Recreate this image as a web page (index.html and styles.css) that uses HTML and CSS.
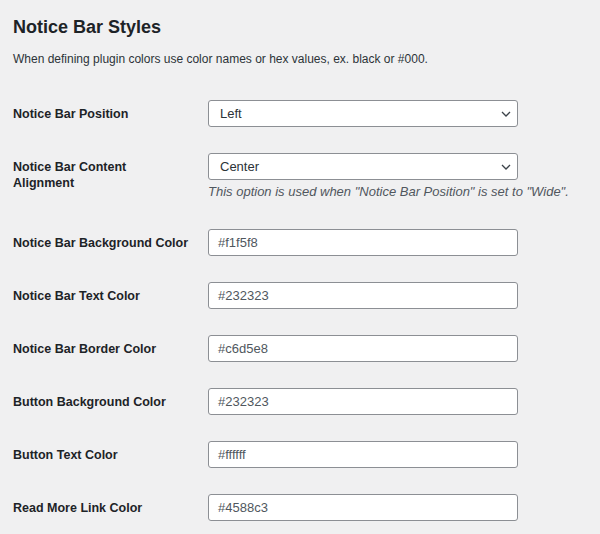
FILE: index.html
```html
<!DOCTYPE html>
<html>
<head>
<meta charset="utf-8">
<link rel="stylesheet" href="styles.css">
</head>
<body>
<div class="page">
  <h2 class="title">Notice Bar Styles</h2>
  <p class="intro">When defining plugin colors use color names or hex values, ex. black or #000.</p>
  <div class="form">
    <div class="row">
      <div class="label">Notice Bar Position</div>
      <div class="field">
        <div class="select"><span>Left</span><svg class="chev" width="10" height="6" viewBox="0 0 10 6"><path d="M1 1l4 4 4-4" fill="none" stroke="#3c434a" stroke-width="1.3"/></svg></div>
      </div>
    </div>
    <div class="row row-desc">
      <div class="label">Notice Bar Content<br>Alignment</div>
      <div class="field">
        <div class="select"><span>Center</span><svg class="chev" width="10" height="6" viewBox="0 0 10 6"><path d="M1 1l4 4 4-4" fill="none" stroke="#3c434a" stroke-width="1.3"/></svg></div>
        <p class="desc">This option is used when "Notice Bar Position" is set to "Wide".</p>
      </div>
    </div>
    <div class="row">
      <div class="label">Notice Bar Background Color</div>
      <div class="field"><div class="input">#f1f5f8</div></div>
    </div>
    <div class="row">
      <div class="label">Notice Bar Text Color</div>
      <div class="field"><div class="input">#232323</div></div>
    </div>
    <div class="row">
      <div class="label">Notice Bar Border Color</div>
      <div class="field"><div class="input">#c6d5e8</div></div>
    </div>
    <div class="row">
      <div class="label">Button Background Color</div>
      <div class="field"><div class="input">#232323</div></div>
    </div>
    <div class="row">
      <div class="label">Button Text Color</div>
      <div class="field"><div class="input">#ffffff</div></div>
    </div>
    <div class="row">
      <div class="label">Read More Link Color</div>
      <div class="field"><div class="input">#4588c3</div></div>
    </div>
  </div>
</div>
</body>
</html>
```

FILE: styles.css
```css
html, body {
  margin: 0;
  padding: 0;
  background: #f0f0f1;
}
body {
  font-family: "Liberation Sans", Arial, sans-serif;
  color: #1d2327;
  font-size: 13px;
}
.page {
  padding: 16px 13px 0 13px;
}
.title {
  margin: 0;
  font-size: 18px;
  font-weight: 700;
  line-height: 22px;
  color: #1d2327;
}
.intro {
  margin: 13px 0 0 0;
  font-size: 12px;
  line-height: 16px;
  color: #2c3338;
}
.form {
  margin-top: 20px;
}
.row {
  display: grid;
  grid-template-columns: 195px 310px;
  padding: 13px 0 13px 0;
}
.row-desc {
  padding-bottom: 19px;
}
.label {
  font-weight: 700;
  font-size: 12.5px;
  line-height: 16px;
  padding-top: 6px;
  color: #1d2327;
  white-space: nowrap;
}
.select, .input {
  box-sizing: border-box;
  height: 27px;
  background: #fff;
  border: 1px solid #8c8f94;
  border-radius: 3px;
  display: flex;
  align-items: center;
  padding: 0 11px 0 9px;
  font-size: 13px;
}
.select {
  justify-content: space-between;
  color: #2c3338;
  padding-left: 11px;
  padding-right: 6px;
}
.input {
  color: #50575e;
}
.desc {
  margin: 3px 0 -4px 0;
  font-style: italic;
  font-size: 13px;
  line-height: 18px;
  color: #50575e;
  white-space: nowrap;
}
```
